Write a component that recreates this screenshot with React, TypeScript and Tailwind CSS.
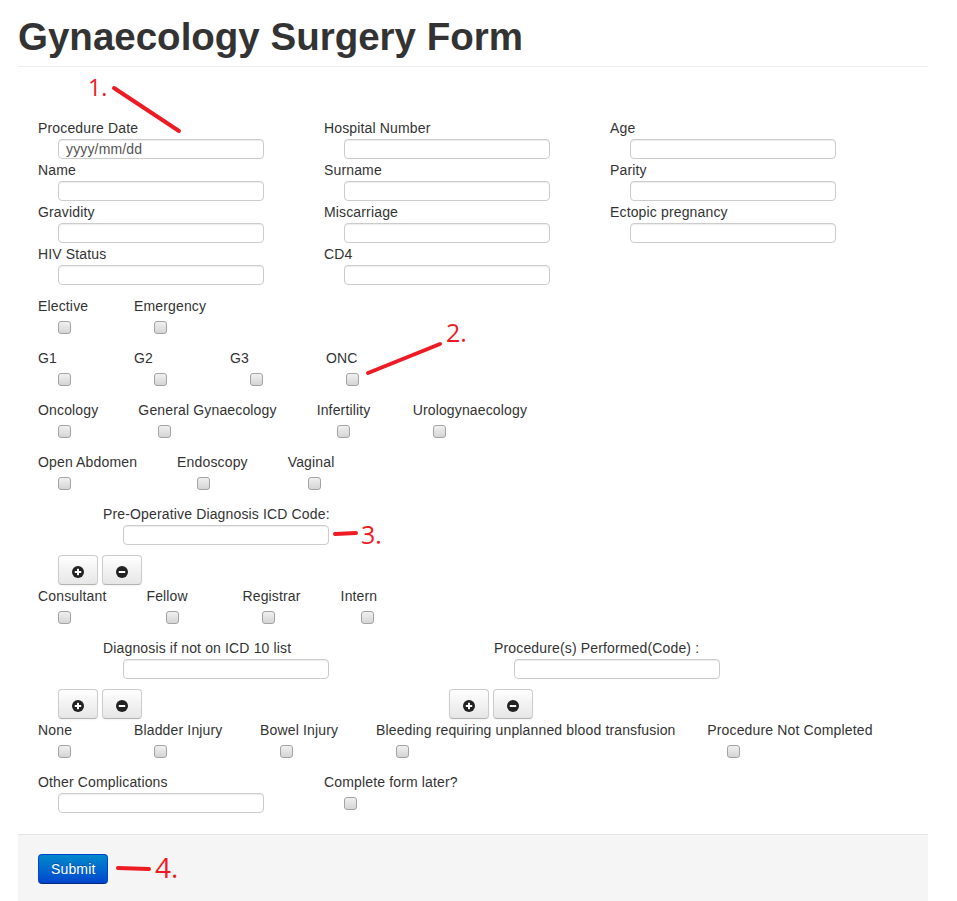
import React from "react";

type Item = { label: string; checked?: boolean };

const TOP_FIELDS = [
  ["Procedure Date", "Hospital Number", "Age"],
  ["Name", "Surname", "Parity"],
  ["Gravidity", "Miscarriage", "Ectopic pregnancy"],
  ["HIV Status", "CD4", ""],
];

const GROUPS: string[][] = [
  ["Elective", "Emergency"],
  ["G1", "G2", "G3", "ONC"],
  ["Oncology", "General Gynaecology", "Infertility", "Urologynaecology"],
  ["Open Abdomen", "Endoscopy", "Vaginal"],
];

const Checkbox = () => (
  <span className="block w-[13px] h-[13px] rounded-[3px] border border-[#a3a3a3] bg-linear-to-b from-[#f0f0f0] to-[#d5d5d5]" />
);

const TextInput = ({ placeholder, className = "" }: { placeholder?: string; className?: string }) => (
  <input
    type="text"
    placeholder={placeholder}
    className={
      "block h-5 w-[206px] rounded-[4px] border border-[#cccccc] bg-white pl-[7px] text-sm tracking-[0.15px] text-[#555] placeholder:text-[#555] shadow-[inset_0_1px_1px_rgba(0,0,0,0.075)] outline-none " +
      className
    }
  />
);

const Field = ({ label, placeholder }: { label: string; placeholder?: string }) => (
  <div className="mb-px">
    <div className="h-5 leading-5">{label}</div>
    <TextInput placeholder={placeholder} className="mt-px ml-5" />
  </div>
);

const CheckItem = ({ label }: Item) => (
  <div className="min-w-[56px] mr-10">
    <div className="h-5 leading-5 whitespace-nowrap">{label}</div>
    <div className="mt-[5px] ml-5">
      <Checkbox />
    </div>
  </div>
);

const CheckGroup = ({ items }: { items: string[] }) => (
  <div className="flex mb-[14px]">
    {items.map((it) => (
      <CheckItem key={it} label={it} />
    ))}
  </div>
);

const PlusIcon = ({ minus }: { minus?: boolean }) => (
  <svg width="12" height="12" viewBox="0 0 12 12" className="mt-[3px]">
    <circle cx="6" cy="6" r="6" fill="#222" />
    <rect x="2.8" y="5" width="6.4" height="2" fill="#fff" />
    {!minus && <rect x="5" y="2.8" width="2" height="6.4" fill="#fff" />}
  </svg>
);

const AddRemove = () => (
  <div className="ml-5 mt-[10px] flex gap-1">
    {[false, true].map((m, i) => (
      <button
        key={i}
        type="button"
        className="flex h-[30px] w-10 items-center justify-center rounded-[4px] border border-[#cccccc] border-b-[#b3b3b3] bg-linear-to-b from-white to-[#e6e6e6] shadow-[inset_0_1px_0_rgba(255,255,255,0.2),0_1px_2px_rgba(0,0,0,0.05)]"
      >
        <PlusIcon minus={m} />
      </button>
    ))}
  </div>
);

const CodeBlock = ({ label }: { label: string }) => (
  <div>
    <div className="h-5 leading-5 pl-[65px] whitespace-nowrap">{label}</div>
    <TextInput className="mt-px ml-[85px]" />
    <AddRemove />
  </div>
);

export default function App() {
  return (
    <div className="relative min-h-[901px] w-[957px] overflow-hidden bg-white font-['Liberation_Sans',Arial,sans-serif] text-sm tracking-[0.15px] text-[#333]">
      <div className="ml-[18px] w-[910px]">
        <h1 className="pt-4 pb-2 text-[38.5px] leading-[42px] font-bold tracking-normal text-[#333] border-b border-[#eeeeee]">
          Gynaecology Surgery Form
        </h1>

        <div className="px-5 pt-[51px]">
          {/* basic details */}
          <div className="grid grid-cols-[286px_286px_286px]">
            {TOP_FIELDS.flat().map((f, i) =>
              f ? (
                <Field key={i} label={f} placeholder={f === "Procedure Date" ? "yyyy/mm/dd" : undefined} />
              ) : (
                <div key={i} />
              )
            )}
          </div>

          <div className="mt-[10px]">
            {GROUPS.map((g, i) => (
              <CheckGroup key={i} items={g} />
            ))}
          </div>

          <CodeBlock label="Pre-Operative Diagnosis ICD Code:" />

          <div className="mt-px">
            <CheckGroup items={["Consultant", "Fellow", "Registrar", "Intern"]} />
          </div>

          <div className="flex">
            <div className="w-[391px]">
              <CodeBlock label="Diagnosis if not on ICD 10 list" />
            </div>
            <CodeBlock label="Procedure(s) Performed(Code) :" />
          </div>

          <div className="mt-px">
            <CheckGroup
              items={[
                "None",
                "Bladder Injury",
                "Bowel Injury",
                "Bleeding requiring unplanned blood transfusion",
                "Procedure Not Completed",
              ]}
            />
          </div>

          <div className="flex">
            <div className="w-[286px]">
              <Field label="Other Complications" />
            </div>
            <CheckItem label="Complete form later?" />
          </div>
        </div>

        <div className="mt-5 border-t border-[#e5e5e5] bg-[#f5f5f5] px-5 pt-[19px] pb-5">
          <button
            type="button"
            className="h-[30px] rounded-[4px] border border-[#0044cc] border-b-[#002a80] bg-linear-to-b from-[#0088cc] to-[#0044cc] px-3 text-sm text-white [text-shadow:0_-1px_0_rgba(0,0,0,0.25)]"
          >
            Submit
          </button>
        </div>
      </div>

      {/* annotations */}
      <svg className="pointer-events-none absolute left-0 top-0" width="957" height="901">
        <g stroke="#ed1c24" strokeWidth="4" strokeLinecap="round">
          <line x1="114" y1="88" x2="179" y2="131" />
          <line x1="368" y1="373" x2="440" y2="344" />
          <line x1="335" y1="534" x2="356" y2="533" />
          <line x1="118" y1="868" x2="149" y2="869" />
        </g>
      </svg>
      <span className="absolute left-[88px] top-[76px] font-['Open_Sans',sans-serif] text-[23px] leading-none tracking-normal text-[#ed1c24]">1.</span>
      <span className="absolute left-[446px] top-[320px] font-['Open_Sans',sans-serif] text-[25px] leading-none tracking-normal text-[#ed1c24]">2.</span>
      <span className="absolute left-[361px] top-[522px] font-['Open_Sans',sans-serif] text-[25px] leading-none tracking-normal text-[#ed1c24]">3.</span>
      <span className="absolute left-[155px] top-[853px] font-['Open_Sans',sans-serif] text-[28px] leading-none tracking-normal text-[#ed1c24]">4.</span>
    </div>
  );
}
